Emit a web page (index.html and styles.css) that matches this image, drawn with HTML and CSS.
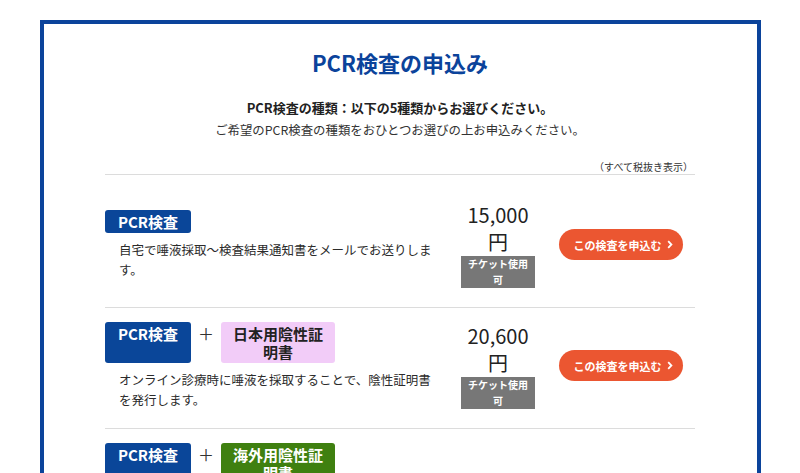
FILE: index.html
```html
<!DOCTYPE html>
<html lang="ja">
<head>
<meta charset="utf-8">
<title>PCR検査の申込み</title>
<link rel="stylesheet" href="styles.css">
</head>
<body>
<div class="frame">
  <h1 class="title">PCR検査の申込み</h1>
  <p class="lead">PCR検査の種類：以下の5種類からお選びください。</p>
  <p class="sub">ご希望のPCR検査の種類をおひとつお選びの上お申込みください。</p>
  <div class="list">
    <p class="note">（すべて税抜き表示）</p>
    <div class="rows">
      <div class="row">
        <div class="info">
          <div class="tags">
            <span class="tag tag-pcr">PCR検査</span>
          </div>
          <p class="desc">自宅で唾液採取〜検査結果通知書をメールでお送りします。</p>
        </div>
        <div class="price">
          <div class="amount">15,000円</div>
          <div class="ticket">チケット使用可</div>
        </div>
        <a class="apply" href="#">この検査を申込む<svg class="chev" width="6" height="9" viewBox="0 0 6 9"><path d="M1.2 1.2 L4.4 4.5 L1.2 7.8" fill="none" stroke="#fff" stroke-width="1.8"/></svg></a>
      </div>
      <div class="row">
        <div class="info">
          <div class="tags">
            <span class="tag tag-pcr">PCR検査</span>
            <span class="plus">＋</span>
            <span class="tag tag-cert tag-jp">日本用陰性証明書</span>
          </div>
          <p class="desc">オンライン診療時に唾液を採取することで、陰性証明書を発行します。</p>
        </div>
        <div class="price">
          <div class="amount">20,600円</div>
          <div class="ticket">チケット使用可</div>
        </div>
        <a class="apply" href="#">この検査を申込む<svg class="chev" width="6" height="9" viewBox="0 0 6 9"><path d="M1.2 1.2 L4.4 4.5 L1.2 7.8" fill="none" stroke="#fff" stroke-width="1.8"/></svg></a>
      </div>
      <div class="row">
        <div class="info">
          <div class="tags">
            <span class="tag tag-pcr">PCR検査</span>
            <span class="plus">＋</span>
            <span class="tag tag-cert tag-intl">海外用陰性証明書</span>
          </div>
          <p class="desc">オンライン診療時に唾液を採取することで、英文の陰性証明書を発行します。渡航先・航空会社により必要な証明書の形式が異なりますので、お申込み前に必ずご確認ください。検査結果通知書とあわせてメールでお送りします。</p>
        </div>
        <div class="price">
          <div class="amount">33,000円</div>
          <div class="ticket">チケット使用可</div>
        </div>
        <a class="apply" href="#">この検査を申込む<svg class="chev" width="6" height="9" viewBox="0 0 6 9"><path d="M1.2 1.2 L4.4 4.5 L1.2 7.8" fill="none" stroke="#fff" stroke-width="1.8"/></svg></a>
      </div>
    </div>
  </div>
</div>
</body>
</html>
```

FILE: styles.css
```css
* { box-sizing: border-box; }
html, body { margin: 0; padding: 0; background: #fff; }
body {
  font-family: "Noto Sans CJK JP", "Noto Sans", sans-serif;
  color: #333;
}
.frame {
  width: 721px;
  margin: 20px auto 0;
  border: 4px solid #0b439b;
  border-bottom: none;
  padding: 22px 0 40px;
}
.title {
  margin: 0;
  text-align: center;
  font-size: 22px;
  line-height: 33px;
  font-weight: 700;
  color: #0b439b;
}
.lead {
  margin: 18px 0 0;
  text-align: center;
  font-size: 13px;
  line-height: 22px;
  font-weight: 700;
  color: #222;
}
.sub {
  margin: 0;
  text-align: center;
  font-size: 12.4px;
  line-height: 22px;
  color: #333;
}
.list {
  width: 590px;
  margin: 19px auto 0;
}
.note {
  margin: 0;
  text-align: right;
  font-size: 10px;
  line-height: 14px;
  padding-right: 2px;
  color: #333;
  border-bottom: 1px solid #dcdcdc;
}
.rows { margin-top: 12px; }
.row {
  display: flex;
  align-items: center;
  padding: 14px 0 19px;
  border-bottom: 1px solid #dcdcdc;
}
.info {
  flex: 1;
  margin-right: 16px;
}
.tags {
  display: flex;
  align-items: stretch;
}
.tag {
  display: block;
  font-size: 15px;
  line-height: 18px;
  font-weight: 700;
  padding: 2.5px 13px;
  border-radius: 3px;
}
.tag-pcr { background: #0a4699; color: #fff; }
.tag-cert {
  width: 114px;
  padding: 2.5px 12px;
  text-align: center;
}
.tag-jp { background: #f2ccf8; color: #222; }
.tag-intl { background: #3f8010; color: #fff; }
.plus {
  align-self: flex-start;
  margin: 0 7px;
  font-size: 16px;
  line-height: 23px;
  color: #333;
}
.desc {
  margin: 7px 0 0;
  padding: 0 6px 0 14px;
  font-size: 12.5px;
  line-height: 19.5px;
  color: #2b2b2b;
}
.price {
  width: 74px;
  text-align: center;
}
.amount {
  font-size: 20px;
  line-height: 27px;
  color: #222;
}
.ticket {
  margin-top: 1px;
  background: #777;
  color: #fff;
  font-size: 10px;
  line-height: 16px;
  font-weight: 700;
  padding: 0 7px;
}
.apply {
  margin-left: 24px;
  margin-right: 12px;
  width: 124px;
  height: 31px;
  border-radius: 16px;
  background: #eb5631;
  color: #fff;
  text-decoration: none;
  font-size: 11px;
  font-weight: 700;
  display: flex;
  align-items: center;
  justify-content: center;
  padding-left: 4px;
}
.chev { margin-left: 5px; }
```
